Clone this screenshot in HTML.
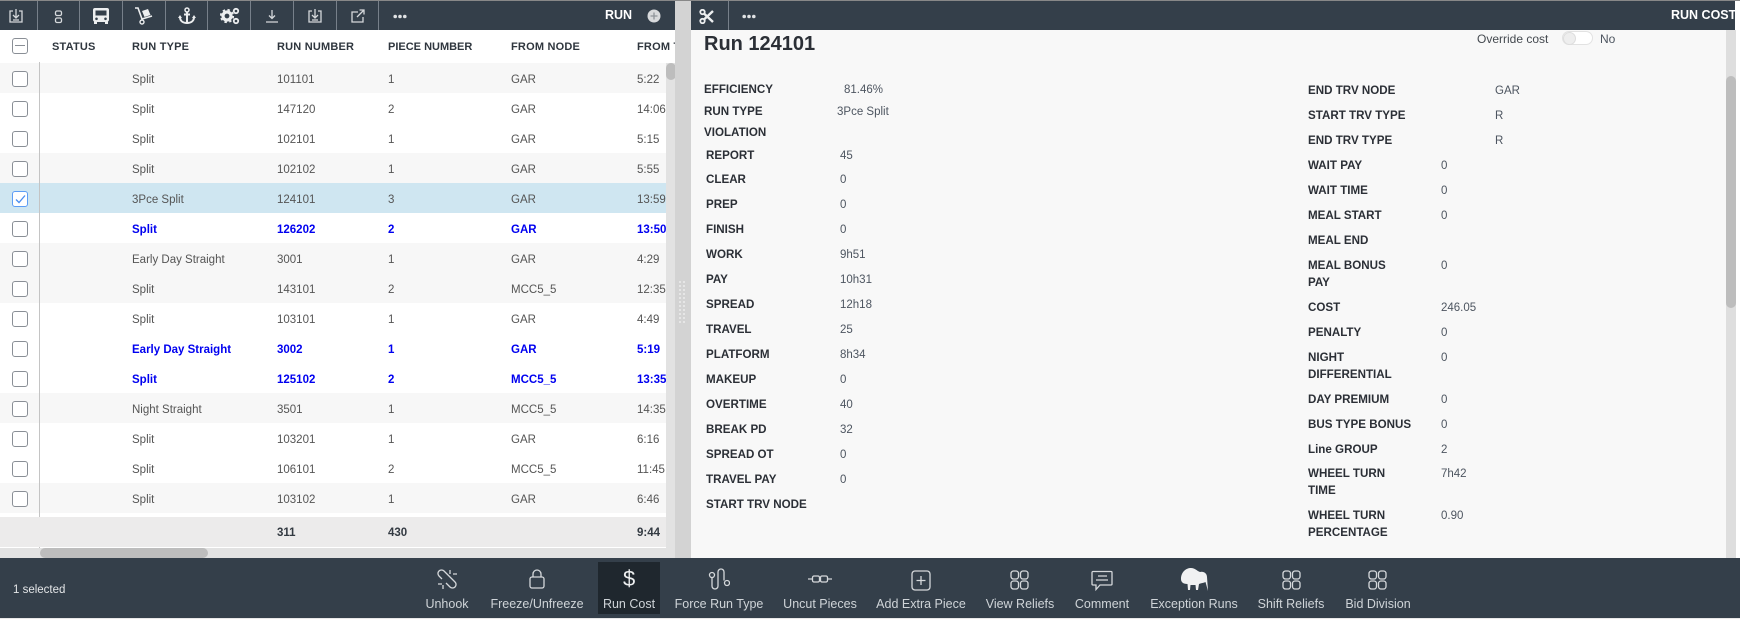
<!DOCTYPE html>
<html><head><meta charset="utf-8"><style>
html,body{margin:0;padding:0}
body{width:1740px;height:619px;overflow:hidden;position:relative;background:#fff;font-family:"Liberation Sans",sans-serif;font-size:11.5px;color:#555}
div,span,svg{position:absolute}
.bar{background:#343f4a}
.sep{top:1px;width:1px;height:29px;background:#77808a}
.hd span{top:39px;font-size:11px;font-weight:bold;color:#2f363e;white-space:nowrap;line-height:16px;letter-spacing:.2px}
.r{left:0;width:666px;height:30px}
.r span{top:9px;line-height:16px;white-space:nowrap}
.g{background:#f7f7f7}.w{background:#fff}.s{background:#cfe6f1}
.b span{color:#0000f0;font-weight:bold}
.a{left:132px}.n{left:277px}.p{left:388px}.f{left:511px}.m{left:637px}
.cb{left:12px;top:8px;width:14px;height:14px;border:1.5px solid #8a8f96;border-radius:3px;background:#fff}
.l,.v{line-height:16px;white-space:nowrap}
.l{font-weight:bold;font-size:11.6px;color:#2b2f36}
.v{font-size:11.5px;color:#4d5560}
.rc{left:0;top:1px;width:1740px;height:560px}
.lb{top:596px;width:120px;text-align:center;color:#cfd4d8;font-size:12.5px;line-height:16px;white-space:nowrap}
.i{fill:none;stroke:#d5d8db;stroke-width:1.3}
</style></head><body>
<div style="left:0;top:0;width:1740px;height:1px;background:#888"></div>
<div class="bar" style="left:0;top:1px;width:675px;height:29px"></div>
<div class="bar" style="left:691px;top:1px;width:1044px;height:29px"></div>
<div class="sep" style="left:37px"></div><div class="sep" style="left:79px"></div><div class="sep" style="left:122px"></div><div class="sep" style="left:165px"></div><div class="sep" style="left:207px"></div><div class="sep" style="left:250px"></div><div class="sep" style="left:293px"></div><div class="sep" style="left:336px"></div><div class="sep" style="left:378px"></div><div class="sep" style="left:728px"></div>

<svg style="left:8px;top:8px" width="16" height="16" viewBox="0 0 16 16" class="i"><path d="M5 3H2v11h12V3h-3M8 1v9M5 7l3 3 3-3M5 12h6"/></svg>
<svg style="left:53px;top:9px" width="12" height="16" viewBox="0 0 12 16" class="i"><rect x="2.500" y="2" width="6" height="4.500" rx="1.500"/><rect x="2.500" y="9" width="6" height="4.500" rx="1.500"/></svg>
<svg style="left:92px;top:7px" width="18" height="18" viewBox="0 0 18 18"><path fill="#eceeef" fill-rule="evenodd" d="M3 1h12a2 2 0 0 1 2 2v10a2 2 0 0 1-1 1.500V17h-3v-2H5v2H2v-2.500A2 2 0 0 1 1 13V3a2 2 0 0 1 2-2zM3.500 3.500v5h11v-5zM4.500 10.500a1.300 1.300 0 1 0 0 2.600 1.300 1.300 0 0 0 0-2.600zM13.500 10.500a1.300 1.300 0 1 0 0 2.600 1.300 1.300 0 0 0 0-2.600z"/></svg>
<svg style="left:135px;top:7px" width="19" height="18" viewBox="0 0 19 18"><path fill="none" stroke="#eceeef" stroke-width="1.600" d="M0 1h3l4 11 10-3"/><circle cx="7" cy="15" r="2" fill="none" stroke="#eceeef" stroke-width="1.400"/><path fill="#eceeef" d="M7 4l6-2 2.500 6-6 2z"/></svg>
<svg style="left:178px;top:7px" width="18" height="18" viewBox="0 0 18 18"><circle cx="9" cy="3" r="2" fill="none" stroke="#eceeef" stroke-width="1.500"/><path fill="none" stroke="#eceeef" stroke-width="2" d="M9 5v11M6 7.500h6M2 10c0 4 3 6 7 6s7-2 7-6"/><path fill="#eceeef" d="M0 11l2-3 2 3zM14 11l2-3 2 3z"/></svg>
<svg style="left:220px;top:7px" width="20" height="18" viewBox="0 0 20 18"><circle cx="7" cy="9" r="4" fill="none" stroke="#eceeef" stroke-width="3.200"/><circle cx="7" cy="9" r="6.300" fill="none" stroke="#eceeef" stroke-width="1.600" stroke-dasharray="2.500 2.500"/><circle cx="16" cy="4" r="2.200" fill="none" stroke="#eceeef" stroke-width="1.800"/><circle cx="16" cy="14" r="2.200" fill="none" stroke="#eceeef" stroke-width="1.800"/></svg>
<svg style="left:264px;top:9px" width="16" height="14" viewBox="0 0 16 14" class="i"><path d="M8 1v8M5 6.500L8 9.500l3-3M2 13h12"/></svg>
<svg style="left:307px;top:8px" width="16" height="16" viewBox="0 0 16 16" class="i"><path d="M5 3H2v11h12V3h-3M8 1v9M5 7l3 3 3-3M5 12h6"/></svg>
<svg style="left:350px;top:8px" width="16" height="16" viewBox="0 0 16 16" class="i"><path d="M13 9v5H2V4h6M7 9l7-7M9.500 2H14v4.500"/></svg>
<svg style="left:393px;top:14px" width="14" height="5" viewBox="0 0 14 5"><circle cx="2.200" cy="2.500" r="1.800" fill="#e0e2e4"/><circle cx="7" cy="2.500" r="1.800" fill="#e0e2e4"/><circle cx="11.800" cy="2.500" r="1.800" fill="#e0e2e4"/></svg>
<span style="left:605px;top:7px;color:#fff;font-weight:bold;font-size:12.500px;line-height:16px">RUN</span>
<svg style="left:647px;top:9px" width="14" height="14" viewBox="0 0 14 14"><circle cx="7" cy="7" r="6.500" fill="#d8dadc"/><path d="M3.500 7h7M7 3.500v7" stroke="#8f9499" stroke-width="1.300"/></svg>

<svg style="left:699px;top:9px" width="15" height="15" viewBox="0 0 15 15"><circle cx="3.500" cy="3" r="2.200" fill="none" stroke="#eceeef" stroke-width="1.800"/><circle cx="3.500" cy="12" r="2.200" fill="none" stroke="#eceeef" stroke-width="1.800"/><path d="M5 4.500L14 13M5 10.500L14 2" stroke="#eceeef" stroke-width="2.400"/></svg>
<svg style="left:742px;top:14px" width="14" height="5" viewBox="0 0 14 5"><circle cx="2.200" cy="2.500" r="1.800" fill="#e0e2e4"/><circle cx="7" cy="2.500" r="1.800" fill="#e0e2e4"/><circle cx="11.800" cy="2.500" r="1.800" fill="#e0e2e4"/></svg>
<span style="left:1671px;top:7px;color:#fff;font-weight:bold;font-size:12.500px;line-height:16px">RUN COST</span>

<div class="hd">
<div class="cb" style="top:38px;background:#fff"><div style="left:2px;top:5.500px;width:10px;height:1.500px;background:#8a8f96"></div></div>
<span style="left:52px">STATUS</span><span style="left:132px">RUN TYPE</span><span style="left:277px">RUN NUMBER</span><span style="left:388px;letter-spacing:0">PIECE NUMBER</span><span style="left:511px">FROM NODE</span><span style="left:637px;width:38px;overflow:hidden">FROM TIME</span>
</div>

<div class="r g" style="top:63px"><div class="cb"></div><span class="a">Split</span><span class="n">101101</span><span class="p">1</span><span class="f">GAR</span><span class="m">5:22</span></div>
<div class="r w" style="top:93px"><div class="cb"></div><span class="a">Split</span><span class="n">147120</span><span class="p">2</span><span class="f">GAR</span><span class="m">14:06</span></div>
<div class="r w" style="top:123px"><div class="cb"></div><span class="a">Split</span><span class="n">102101</span><span class="p">1</span><span class="f">GAR</span><span class="m">5:15</span></div>
<div class="r g" style="top:153px"><div class="cb"></div><span class="a">Split</span><span class="n">102102</span><span class="p">1</span><span class="f">GAR</span><span class="m">5:55</span></div>
<div class="r s" style="top:183px"><div class="cb" style="border-color:#5d9df5"><svg style="left:1px;top:1px" width="12" height="12" viewBox="0 0 12 12"><path d="M2 6.500l3 3 6-7" fill="none" stroke="#4a8df0" stroke-width="1.300"/></svg></div><span class="a">3Pce Split</span><span class="n">124101</span><span class="p">3</span><span class="f">GAR</span><span class="m">13:59</span></div>
<div class="r w b" style="top:213px"><div class="cb"></div><span class="a">Split</span><span class="n">126202</span><span class="p">2</span><span class="f">GAR</span><span class="m">13:50</span></div>
<div class="r g" style="top:243px"><div class="cb"></div><span class="a">Early Day Straight</span><span class="n">3001</span><span class="p">1</span><span class="f">GAR</span><span class="m">4:29</span></div>
<div class="r g" style="top:273px"><div class="cb"></div><span class="a">Split</span><span class="n">143101</span><span class="p">2</span><span class="f">MCC5_5</span><span class="m">12:35</span></div>
<div class="r w" style="top:303px"><div class="cb"></div><span class="a">Split</span><span class="n">103101</span><span class="p">1</span><span class="f">GAR</span><span class="m">4:49</span></div>
<div class="r w b" style="top:333px"><div class="cb"></div><span class="a">Early Day Straight</span><span class="n">3002</span><span class="p">1</span><span class="f">GAR</span><span class="m">5:19</span></div>
<div class="r w b" style="top:363px"><div class="cb"></div><span class="a">Split</span><span class="n">125102</span><span class="p">2</span><span class="f">MCC5_5</span><span class="m">13:35</span></div>
<div class="r g" style="top:393px"><div class="cb"></div><span class="a">Night Straight</span><span class="n">3501</span><span class="p">1</span><span class="f">MCC5_5</span><span class="m">14:35</span></div>
<div class="r w" style="top:423px"><div class="cb"></div><span class="a">Split</span><span class="n">103201</span><span class="p">1</span><span class="f">GAR</span><span class="m">6:16</span></div>
<div class="r w" style="top:453px"><div class="cb"></div><span class="a">Split</span><span class="n">106101</span><span class="p">2</span><span class="f">MCC5_5</span><span class="m">11:45</span></div>
<div class="r g" style="top:483px"><div class="cb"></div><span class="a">Split</span><span class="n">103102</span><span class="p">1</span><span class="f">GAR</span><span class="m">6:46</span></div>

<div style="left:39px;top:62px;width:1px;height:496px;background:#c4c4c4"></div>
<div style="left:0;top:517px;width:666px;height:30px;background:#ecebeb"></div>
<span style="left:277px;top:525px;font-weight:bold;color:#333a42;line-height:16px">311</span><span style="left:388px;top:525px;font-weight:bold;color:#333a42;line-height:16px">430</span><span style="left:637px;top:525px;font-weight:bold;color:#333a42;line-height:16px">9:44</span>
<div style="left:0;top:548px;width:675px;height:10px;background:#e2e2e2"></div>
<div style="left:40px;top:548px;width:168px;height:10px;border-radius:5px;background:#bdbdbd"></div>
<div style="left:666px;top:63px;width:9px;height:495px;background:#e2e2e2"></div>
<div style="left:666px;top:63px;width:10px;height:17px;border-radius:5px;background:#bdbdbd"></div>
<div style="left:675px;top:1px;width:16px;height:557px;background:#d3d3d3"></div>
<svg style="left:678px;top:280px" width="8" height="44" viewBox="0 0 8 44"><path d="M2 1v42M6 1v42" stroke="#e6e6e6" stroke-width="2" stroke-dasharray="2 2"/></svg>

<div style="left:691px;top:30px;width:1035px;height:528px;background:#f8f8f8"></div>
<div style="left:1726px;top:30px;width:10px;height:528px;background:#dedede"></div>
<div style="left:1726px;top:76px;width:10px;height:232px;border-radius:5px;background:#bdbdbd"></div>
<span style="left:704px;top:32px;font-size:20px;font-weight:bold;color:#2b2f36;line-height:24px">Run 124101</span>
<span class="v" style="left:1477px;top:31px;color:#44494f;font-size:12px">Override cost</span>
<div style="left:1562px;top:31px;width:29px;height:12px;border:1px solid #e2e2e2;border-radius:7px;background:#fff"></div>
<div style="left:1563px;top:32px;width:11px;height:11px;border-radius:50%;background:#eee;border:1px solid #ddd"></div>
<span class="v" style="left:1600px;top:31px;font-size:12px">No</span>

<span class="l" style="left:704px;top:82px">EFFICIENCY</span><span class="v" style="left:844px;top:82px">81.46%</span>
<span class="l" style="left:704px;top:104px">RUN TYPE</span><span class="v" style="left:837px;top:104px">3Pce Split</span>
<span class="l" style="left:704px;top:125px">VIOLATION</span>
<span class="l" style="left:706px;top:148px">REPORT</span><span class="v" style="left:840px;top:148px">45</span>
<span class="l" style="left:706px;top:172px">CLEAR</span><span class="v" style="left:840px;top:172px">0</span>
<span class="l" style="left:706px;top:197px">PREP</span><span class="v" style="left:840px;top:197px">0</span>
<span class="l" style="left:706px;top:222px">FINISH</span><span class="v" style="left:840px;top:222px">0</span>
<span class="l" style="left:706px;top:247px">WORK</span><span class="v" style="left:840px;top:247px">9h51</span>
<span class="l" style="left:706px;top:272px">PAY</span><span class="v" style="left:840px;top:272px">10h31</span>
<span class="l" style="left:706px;top:297px">SPREAD</span><span class="v" style="left:840px;top:297px">12h18</span>
<span class="l" style="left:706px;top:322px">TRAVEL</span><span class="v" style="left:840px;top:322px">25</span>
<span class="l" style="left:706px;top:347px">PLATFORM</span><span class="v" style="left:840px;top:347px">8h34</span>
<span class="l" style="left:706px;top:372px">MAKEUP</span><span class="v" style="left:840px;top:372px">0</span>
<span class="l" style="left:706px;top:397px">OVERTIME</span><span class="v" style="left:840px;top:397px">40</span>
<span class="l" style="left:706px;top:422px">BREAK PD</span><span class="v" style="left:840px;top:422px">32</span>
<span class="l" style="left:706px;top:447px">SPREAD OT</span><span class="v" style="left:840px;top:447px">0</span>
<span class="l" style="left:706px;top:472px">TRAVEL PAY</span><span class="v" style="left:840px;top:472px">0</span>
<span class="l" style="left:706px;top:497px">START TRV NODE</span>

<div class="rc">
<span class="l" style="left:1308px;top:82px">END TRV NODE</span><span class="v" style="left:1495px;top:82px">GAR</span>
<span class="l" style="left:1308px;top:107px">START TRV TYPE</span><span class="v" style="left:1495px;top:107px">R</span>
<span class="l" style="left:1308px;top:132px">END TRV TYPE</span><span class="v" style="left:1495px;top:132px">R</span>
<span class="l" style="left:1308px;top:157px">WAIT PAY</span><span class="v" style="left:1441px;top:157px">0</span>
<span class="l" style="left:1308px;top:182px">WAIT TIME</span><span class="v" style="left:1441px;top:182px">0</span>
<span class="l" style="left:1308px;top:207px">MEAL START</span><span class="v" style="left:1441px;top:207px">0</span>
<span class="l" style="left:1308px;top:232px">MEAL END</span>
<span class="l" style="left:1308px;top:257px">MEAL BONUS</span><span class="l" style="left:1308px;top:274px">PAY</span><span class="v" style="left:1441px;top:257px">0</span>
<span class="l" style="left:1308px;top:299px">COST</span><span class="v" style="left:1441px;top:299px">246.05</span>
<span class="l" style="left:1308px;top:324px">PENALTY</span><span class="v" style="left:1441px;top:324px">0</span>
<span class="l" style="left:1308px;top:349px">NIGHT</span><span class="l" style="left:1308px;top:366px">DIFFERENTIAL</span><span class="v" style="left:1441px;top:349px">0</span>
<span class="l" style="left:1308px;top:391px">DAY PREMIUM</span><span class="v" style="left:1441px;top:391px">0</span>
<span class="l" style="left:1308px;top:416px">BUS TYPE BONUS</span><span class="v" style="left:1441px;top:416px">0</span>
<span class="l" style="left:1308px;top:441px">Line GROUP</span><span class="v" style="left:1441px;top:441px">2</span>
<span class="l" style="left:1308px;top:465px">WHEEL TURN</span><span class="l" style="left:1308px;top:482px">TIME</span><span class="v" style="left:1441px;top:465px">7h42</span>
<span class="l" style="left:1308px;top:507px">WHEEL TURN</span><span class="l" style="left:1308px;top:524px">PERCENTAGE</span><span class="v" style="left:1441px;top:507px">0.90</span>
</div>

<div class="bar" style="left:0;top:558px;width:1740px;height:60px"></div>
<div style="left:0;top:618px;width:1740px;height:1px;background:#e8e8e8"></div>
<span style="left:13px;top:582px;color:#e4e6e8;font-size:11.500px;line-height:16px">1 selected</span>
<div style="left:598px;top:562px;width:62px;height:52px;background:#1f272e"></div>

<svg style="left:436px;top:568px" width="22" height="22" viewBox="0 0 22 22" class="i"><path d="M12 7L8 3a3.500 3.500 0 0 0-5 5l3 3M10 15l4 4a3.500 3.500 0 0 0 5-5l-3-3-5-5M14 2v4M21 6h-4M2 16h4M7 21v-4"/></svg>
<svg style="left:528px;top:568px" width="18" height="22" viewBox="0 0 18 22" class="i"><rect x="2" y="9" width="14" height="11" rx="2"/><path d="M5 9V6a4 4 0 0 1 8 0v3"/></svg>
<span style="left:623px;top:566px;color:#eef0f1;font-size:22px;line-height:26px">$</span>
<svg style="left:708px;top:568px" width="22" height="22" viewBox="0 0 22 22" class="i"><circle cx="4" cy="7" r="2.500"/><circle cx="19" cy="15" r="2.500"/><path d="M4 9.500V18a3 3 0 0 0 6 0V4a3 3 0 0 1 6 0v8.500"/></svg>
<svg style="left:807px;top:574px" width="26" height="10" viewBox="0 0 26 10" class="i"><rect x="5.500" y="2" width="7" height="6" rx="1.500"/><rect x="13.500" y="2" width="7" height="6" rx="1.500"/><path d="M1 5h4M21 5h4"/></svg>
<svg style="left:911px;top:570px" width="20" height="21" viewBox="0 0 20 21" class="i"><rect x="1" y="1" width="18" height="19" rx="3"/><path d="M10 6v9M5.500 10.500h9"/></svg>
<svg style="left:1010px;top:570px" width="19" height="20" viewBox="0 0 19 20" class="i"><rect x="1" y="1" width="7.500" height="8" rx="2.500"/><rect x="10.500" y="1" width="7.500" height="8" rx="2.500"/><rect x="1" y="11" width="7.500" height="8" rx="2.500"/><rect x="10.500" y="11" width="7.500" height="8" rx="2.500"/></svg>
<svg style="left:1091px;top:570px" width="22" height="21" viewBox="0 0 22 21" class="i"><path d="M2 1.500h18a1 1 0 0 1 1 1V14a1 1 0 0 1-1 1H9l-4 4.500V15H2a1 1 0 0 1-1-1V2.500a1 1 0 0 1 1-1z"/><path d="M7 6h9M5 10h12"/></svg>
<svg style="left:1180px;top:568px" width="28" height="24" viewBox="0 0 28 24"><path fill="#f0f1f2" d="M1 11C1 4 6 0 11 0c4 0 6 3 9 4 3-1 7 1 7 5l1 14-2.500-9c-2 1-4 1-6.500 2l-1 6h-2l-.5-5h-5l-.5 5h-2l-.5-6C3 16 1 14 1 11z"/></svg>
<svg style="left:1282px;top:570px" width="19" height="20" viewBox="0 0 19 20" class="i"><rect x="1" y="1" width="7.500" height="8" rx="2.500"/><rect x="10.500" y="1" width="7.500" height="8" rx="2.500"/><rect x="1" y="11" width="7.500" height="8" rx="2.500"/><rect x="10.500" y="11" width="7.500" height="8" rx="2.500"/></svg>
<svg style="left:1368px;top:570px" width="19" height="20" viewBox="0 0 19 20" class="i"><rect x="1" y="1" width="7.500" height="8" rx="2.500"/><rect x="10.500" y="1" width="7.500" height="8" rx="2.500"/><rect x="1" y="11" width="7.500" height="8" rx="2.500"/><rect x="10.500" y="11" width="7.500" height="8" rx="2.500"/></svg>

<span class="lb" style="left:387px">Unhook</span>
<span class="lb" style="left:477px">Freeze/Unfreeze</span>
<span class="lb" style="left:569px">Run Cost</span>
<span class="lb" style="left:659px">Force Run Type</span>
<span class="lb" style="left:760px">Uncut Pieces</span>
<span class="lb" style="left:861px">Add Extra Piece</span>
<span class="lb" style="left:960px">View Reliefs</span>
<span class="lb" style="left:1042px">Comment</span>
<span class="lb" style="left:1134px">Exception Runs</span>
<span class="lb" style="left:1231px">Shift Reliefs</span>
<span class="lb" style="left:1318px">Bid Division</span>
</body></html>
